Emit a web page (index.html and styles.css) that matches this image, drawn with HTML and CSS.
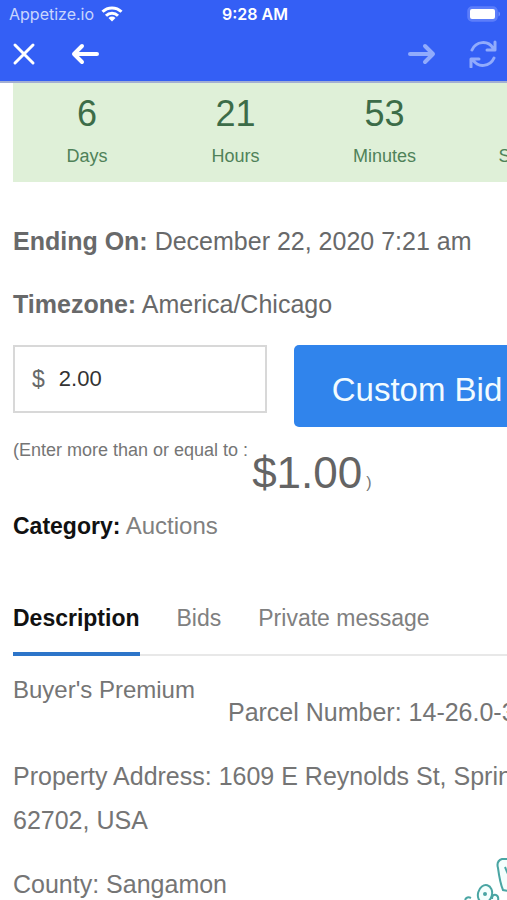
FILE: index.html
```html
<!DOCTYPE html>
<html lang="en">
<head>
<meta charset="utf-8">
<meta name="viewport" content="width=device-width, initial-scale=1">
<title>Auction</title>
<link rel="stylesheet" href="styles.css">
</head>
<body>
<header class="topbar">
  <div class="status">
    <div class="carrier"><span>Appetize.io</span>
      <svg width="22" height="16" viewBox="0 0 22 16" fill="none" stroke="#fff" stroke-width="3"><path d="M1.5 5.800a13.500 13.500 0 0 1 19 0M5 9.700a8.500 8.500 0 0 1 12 0"/><path d="M11 15.500 7.500 12a5 5 0 0 1 7 0z" fill="#fff" stroke="none"/></svg>
    </div>
    <div class="clock">9:28 AM</div>
    <svg class="battery" width="34" height="16" viewBox="0 0 34 16"><rect x="1" y="1" width="29" height="14" rx="4" fill="#5c7efa" stroke="#5c7efa" stroke-width="1.500"/><rect x="3" y="3" width="25" height="10" rx="2" fill="#fff"/><path d="M31.500 5.500c2 .8 2 4.200 0 5z" fill="#7391fb"/></svg>
  </div>
  <nav class="tools">
    <button type="button" aria-label="Close"><svg width="24" height="24" viewBox="0 0 24 24"><path d="m3 3 18 18M21 3 3 21"/></svg></button>
    <button type="button" class="back" aria-label="Back"><svg width="28" height="24" viewBox="0 0 28 24"><path class="bold" d="M26 12H3M11 4l-8 8 8 8"/></svg></button>
    <button type="button" class="forward dim" aria-label="Forward"><svg width="28" height="24" viewBox="0 0 28 24"><path class="bold" d="M2 12h23M17 4l8 8-8 8"/></svg></button>
    <button type="button" class="dim" aria-label="Reload"><svg width="28" height="28" viewBox="0 0 28 28"><path d="M3 10C7 1 19 0 24 8M26 2v8h-8M25 18C21 27 9 28 4 20M2 27v-8h8"/></svg></button>
  </nav>
</header>
<main class="content">
  <section class="countdown" aria-label="Time left">
    <div class="unit"><b>6</b><span>Days</span></div>
    <div class="unit"><b>21</b><span>Hours</span></div>
    <div class="unit"><b>53</b><span>Minutes</span></div>
    <div class="unit"><b></b><span>Seconds</span></div>
  </section>
  <p class="fact"><strong>Ending On:</strong> December 22, 2020 7:21 am</p>
  <p class="fact"><strong>Timezone:</strong> America/Chicago</p>
  <form class="bid">
    <label class="amount"><span>$</span><input type="text" value="2.00" aria-label="Bid amount"></label>
    <button type="button" class="submit">Custom Bid</button>
  </form>
  <p class="hint"><span>(Enter more than or equal to :</span><span class="price">$1.00</span><span class="close">)</span></p>
  <p class="category"><strong>Category:</strong> <a href="#auctions">Auctions</a></p>
  <nav class="tabs">
    <a class="active" href="#description">Description</a>
    <a href="#bids">Bids</a>
    <a href="#message">Private message</a>
  </nav>
  <section class="details" id="description">
    <div class="intro"><h2>Buyer's Premium</h2><p>Parcel Number: 14-26.0-376</p></div>
    <p class="address">Property Address: 1609 E Reynolds St, Springfield,<br>62702, USA</p>
    <p>County: Sangamon</p>
  </section>
</main>
<svg class="stamp" width="50" height="50" viewBox="0 0 50 50" aria-hidden="true"><g fill="#f4fffd" stroke="#4aa5a3" stroke-width="2"><path d="M41 18q-2-7 4-9l6 0v32l-5-1q-3-7-5-22z"/><path d="m48 17 3 7"/><ellipse cx="28" cy="44" rx="7" ry="9" transform="rotate(15 28 44)"/><circle cx="28" cy="44" r="1" fill="#2f7f80"/><path d="M35 49q0-5 4-4 3 1 2 6M8 50q2-4 6-2"/></g></svg>
</body>
</html>
```
FILE: styles.css
```css
* { box-sizing: border-box; }
body { margin: 0; min-height: 100vh; overflow-x: hidden; background: #fff; color: #68696a; font-family: "Liberation Sans", Arial, sans-serif; font-size: 25px; position: relative; }
p, h2 { margin: 0; }
button { border: 0; padding: 0; background: none; font: inherit; cursor: pointer; }
svg { display: block; }
a { color: inherit; text-decoration: none; }

.topbar { height: 83px; background: #345ff5; border-bottom: 2px solid #a3afd3; color: #fff; }
.status { display: grid; grid-template-columns: 1fr auto 1fr; align-items: center; height: 28px; padding: 0 6px 0 9px; font-family: Inter, sans-serif; font-size: 16px; }
.carrier { display: flex; align-items: center; gap: 7px; color: #c9d5fd; }
.clock { font-weight: 600; }
.battery { justify-self: end; }
.tools { display: flex; align-items: center; height: 52px; padding: 0 10px 0 12px; }
.tools path { fill: none; stroke: #fff; stroke-width: 3; stroke-linecap: round; stroke-linejoin: round; }
.tools .bold { stroke-width: 4; }
.tools .dim path { stroke: #91abfc; }
.back { margin-left: 35px; }
.forward { margin-left: auto; margin-right: 33px; }

.content { padding-left: 13px; overflow: hidden; }
.countdown { display: flex; height: 99px; background: #dff0d8; color: #4f8259; overflow: hidden; }
.unit { flex: 0 0 148px; text-align: center; padding-top: 10px; }
.unit + .unit { flex-basis: 149px; }
.unit b, .unit span { display: block; }
.unit b { height: 42px; font-size: 36px; line-height: 42px; font-weight: 400; color: #3c6c48; }
.unit span { font-size: 18px; line-height: 42px; }
.fact { font-size: 25px; line-height: 31px; margin-top: 32px; white-space: nowrap; }
.countdown + .fact { margin-top: 44px; }
.bid { display: flex; align-items: flex-start; gap: 27px; margin: 25px 0 0; }
.amount { display: flex; align-items: center; gap: 14px; flex: 0 0 254px; height: 68px; padding-left: 17px; border: 2px solid #d8d8d8; font-size: 23px; }
.amount input { width: 160px; border: 0; padding: 0; outline: 0; background: none; font: inherit; font-size: 22px; color: #333; }
.submit { flex: 0 0 246px; height: 82px; padding-top: 8px; border-radius: 5px; background: #3084ec; color: #f2fbff; font-size: 33px; }
.hint { display: flex; align-items: baseline; gap: 4px; height: 71px; font-size: 18px; white-space: nowrap; color: #757575; }
.hint > span:first-child { align-self: flex-start; line-height: 46px; }
.price { font-size: 44px; line-height: 92px; color: #646464; }
.close { font-size: 16px; }
.category { font-size: 24px; line-height: 30px; margin-top: 13px; color: #808080; }
.category strong, .tabs .active { color: #111; font-weight: 700; font-size: 23px; }
.tabs { display: flex; gap: 37px; margin-top: 57px; border-bottom: 2px solid #e8e8e8; font-size: 23px; line-height: 40px; color: #808080; white-space: nowrap; }
.tabs a { height: 58px; margin-bottom: -2px; }
.tabs .active { border-bottom: 4px solid #2d75c9; }
.details { line-height: 44px; color: #757575; white-space: nowrap; }
.intro { display: flex; gap: 33px; padding-top: 12px; }
.intro h2 { font-size: 24px; font-weight: 400; }
.intro p { padding-top: 22px; }
.details > p { margin-top: 20px; }
.stamp { position: absolute; right: 0; bottom: 6px; }
```
